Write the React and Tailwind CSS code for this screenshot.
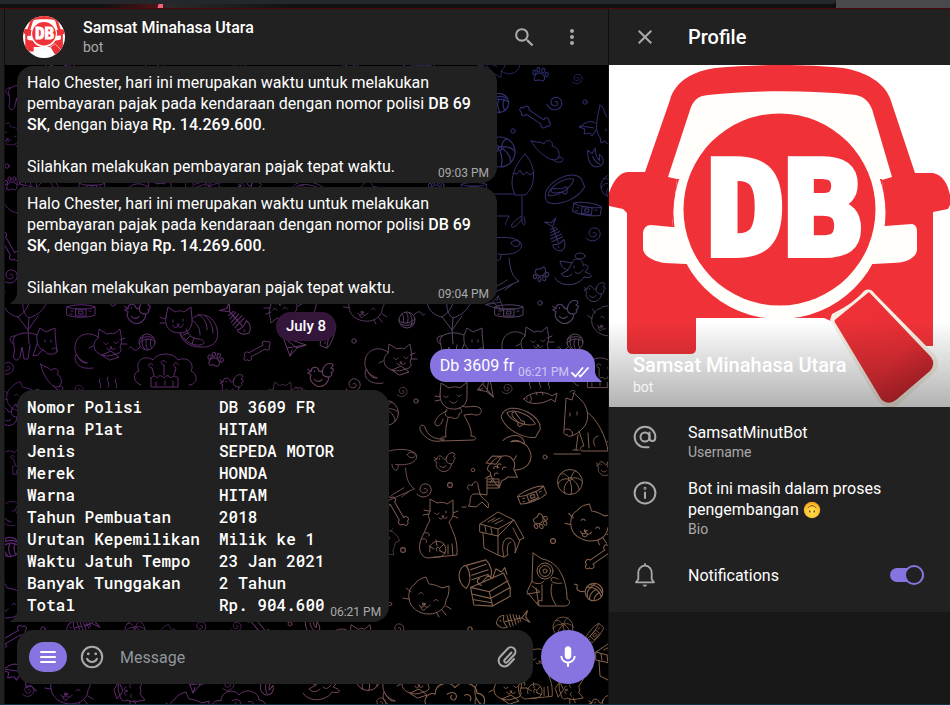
import React from "react";
import { MdSearch, MdMoreVert, MdClose, MdMic } from "react-icons/md";

/* ---------- Wallpaper doodles ---------- */

const DOODLES = {
  bone: (
    <path d="M-9 -2.5 H9 C8 -6 13 -8 14 -4 C18 -4 18 1 14.500 1 C15 5 10 6 9 2.500 H-9 C-8 6 -13 7 -14 3.500 C-18 4 -18 -1 -14.500 -1 C-15 -5 -10 -6 -9 -2.500Z" />
  ),
  paw: (
    <>
      <path d="M-5 5 C-6 1 -3 -2 0 -2 C3 -2 6 1 5 4 C4 7 1 5 0 5 C-2 5 -4 8 -5 5Z" />
      <ellipse cx="-6" cy="-1.500" rx="1.600" ry="2.200" />
      <ellipse cx="-2.500" cy="-5" rx="1.600" ry="2.200" />
      <ellipse cx="2.500" cy="-5" rx="1.600" ry="2.200" />
      <ellipse cx="6.500" cy="-1.500" rx="1.600" ry="2.200" />
    </>
  ),
  swirl: <path d="M0 0 C1 -2 4 0 3 2.500 C1 5 -4 4 -4 0 C-4 -5 2 -7 6 -3 C9 2 6 7 0 8 C-3 8 -5 7 -7 5" />,
  dot: <circle r="2.200" />,
  yarn: (
    <>
      <circle r="8" />
      <path d="M-7 -3 C-2 -6 3 -6 6 -4 M-8 1 C-3 -4 3 -4 8 -1 M-4 -6 C-6 0 -5 5 -2 7 M0 -3 C-2 1 -1 5 1 8 M4 -3 C3 1 3 4 5 6 M-7 5 C-10 9 -14 9 -15 6 C-16 4 -17 5 -18 6" />
    </>
  ),
  ball: (
    <>
      <circle r="12.500" />
      <circle cy="-3" r="1.500" />
      <path d="M-1 -4 C-4 -8 -7 -9 -9 -8 M1 -4 C2 -8 4 -11 6 -11 M-2 -3 C-7 -4 -11 -1 -12 2 M-1 -2 C-6 3 -7 7 -5 11 M0 -1 C2 4 2 8 1 12 M2 -3 C6 0 9 4 9 8 M2 -4 C6 -5 10 -3 12 -1" />
    </>
  ),
  fishbone: (
    <path d="M-16 0 C-14 -6 -9 -7 -7 -6 C-9 -2 -8 3 -6 6 C-11 7 -15 4 -16 0Z M-7 0 H10 M10 0 L17 -6 L14 0 L17 6 L10 0 M-4 -6 L-3 6 M-1 -6 L0 6 M2 -5 L3 5 M5 -4 L6 4 M8 -3 L8 3 M-12 -2 L-11 -1" />
  ),
  collar: (
    <>
      <path d="M-14 -4 C-8 -7 8 -7 14 -4 V4 C8 7 -8 7 -14 4Z M-14 -4 C-8 -1 8 -1 14 -4 M-5 -2 H5 V5 H-5Z M-2 0 H2 V3 H-2Z" />
      <path d="M-10 0 H-8 M8 0 H10 M-11 3 H-9" />
    </>
  ),
  bird: (
    <path d="M-12 -6 L-9 -4 C-9 -9 -3 -9 -2 -5 C0 -3 1 -4 2 -7 C4 -11 7 -12 10 -11 C12 -10 10 -8 9 -7 C12 -7 12 -4 9 -3 C11 -2 9 1 7 1 C7 7 1 11 -4 9 C-9 7 -11 2 -9 -1 L-12 -3 L-9 -4 M2 -7 C0 -2 2 1 7 1 M-6 -5 V-4 M-6 3 C-4 6 0 5 1 3" />
  ),
  catFace: (
    <path d="M-19 3 C-20 -3 -18 -9 -13 -12 C-11 -16 -6 -18 -2 -19 C-1 -16 0 -14 1 -12 C5 -12 10 -10 14 -8 L21 -10 C21 -5 21 -1 18 4 C18 12 10 18 1 18 C-9 18 -18 12 -19 3Z M-9 -2 C-8 -4 -6 -4 -5 -2 M6 5 C7 3 9 3 10 5 M-5 7 L-2 8 L-5 9Z M-4 9 C-3 12 -8 12 -9 9 M-4 9 C-3 12 1 12 2 9 M-7 11 C-7 15 -3 15 -2 12 M-22 -8 L-17 -4 M-25 2 L-20 3 M14 14 L18 19 M18 10 L23 13 M9 17 L11 21" />
  ),
  catSit: (
    <path d="M-9 -17 L-9 -29 L-2 -25 C2 -26 5 -26 8 -24 L14 -28 L14 -17 C15 -11 12 -9 10 -6 C14 4 19 12 18 27 L-12 30 C-20 28 -22 18 -16 7 C-13 1 -12 -3 -9 -8 C-11 -11 -11 -14 -9 -17Z M-15 -18 L-10 -17 M-16 -13 L-10 -14 M14 -15 L19 -17 M14 -12 L19 -10 M-4 -15 C-3 -13 -1 -13 0 -15 M7 -17 V-15 M3 -12 L5 -12 L4 -11 C3 -8 0 -9 0 -10 M4 -11 C5 -9 8 -9 8 -11 M-14 5 C-10 4 -9 6 -10 8 M-17 11 C-13 10 -11 13 -13 15 M-9 24 C-12 14 2 9 6 18 C9 25 3 31 -5 29 M-2 23 C-5 18 2 18 1 23 M-10 18 L-5 21 M-3 12 L-2 18 M5 16 L1 20 M6 25 L1 23 M9 26 V17 M14 27 L13 16" />
  ),
  catCurl: (
    <path d="M-2 -8 L-1 -17 L7 -12 C10 -13 12 -13 14 -12 L20 -17 C21 -10 23 -5 20 1 C23 5 19 8 15 8 C8 12 -2 9 -5 4 C-7 -1 -6 -5 -2 -8Z M-2 -9 C-12 -16 -24 -11 -25 0 C-26 8 -21 14 -13 17 M-13 17 C-20 18 -22 10 -24 8 C-28 18 -18 24 -7 22 M4 -3 C5 -1 7 -1 8 -3 M14 -4 C15 -2 17 -2 18 -4 M10 1 L12 1 L11 2 C10 5 7 4 7 2 M11 2 C12 4 15 4 15 2 M2 9 L11 5 L19 11 L10 14Z M20 -6 L25 -8 M21 -2 L27 -2 M-7 0 L-11 2" />
  ),
  catStripe: (
    <path d="M-24 -10 L-22 -20 L-15 -15 C-11 -17 -8 -16 -6 -15 L1 -20 L2 -8 C3 1 -3 6 -10 6 C-20 6 -26 0 -24 -10Z M2 -8 C10 -16 24 -12 27 2 C30 15 22 21 10 20 C0 20 -8 15 -10 6 M-17 -7 V-5 M-7 -8 V-6 M-13 -3 L-11 -3 L-12 -1 C-14 2 -17 0 -17 -2 M-12 -1 C-10 2 -7 0 -7 -3 M-30 -10 L-25 -8 M-30 -4 L-25 -4 M-10 6 C-6 15 4 19 10 18 C17 17 14 12 8 12 C0 11 -3 5 -4 2 M-7 8 L-2 6 M-4 13 L0 9 M2 17 L4 11 M8 -13 C15 -8 17 -4 17 3 M15 -11 C20 -7 23 -1 23 6 M3 -6 C8 -3 10 2 10 8" />
  ),
  catWave: (
    <path d="M-12 -21 L-11 -33 L-3 -28 C2 -30 6 -29 8 -28 L15 -34 L15 -19 C15 -12 10 -8 4 -7 C-5 -6 -12 -11 -12 -21Z M-8 -20 C-7 -18 -5 -18 -4 -20 M5 -21 C6 -19 8 -19 9 -21 M-2 -15 C0 -12 3 -12 5 -15 M-17 -20 L-12 -19 M-17 -15 L-12 -16 M-5 -7 C-10 -2 -4 3 -1 1 C3 4 8 2 7 -2 C12 -4 9 -8 7 -8 M10 -10 C15 -7 22 -12 28 -8 C32 -3 26 1 20 -2 L12 -1 C17 8 20 14 19 20 C24 20 25 23 22 24 L-10 25 C-13 23 -10 20 -6 21 C-7 12 -5 7 -4 2 M-5 -5 C-12 -3 -18 4 -17 8 C-15 12 -10 9 -9 3 M-8 23 C-18 24 -25 19 -27 11 C-30 7 -33 10 -32 14 C-27 23 -18 28 -8 24" />
  ),
  dogSit: (
    <path d="M-19 13 C-24 13 -23 7 -19 7 C-14 7 -12 12 -15 14 C-16 15 -18 14 -19 13Z M-22 8 L-20 -24 L-14 -22 L-12 -29 L-5 -22 C4 -13 3 0 -3 6 C-6 10 -10 12 -14 14 M-16 -9 V-6 M-9 -10 V-7 M1 -10 C12 -2 20 15 22 29 H-4 C-7 27 -5 24 -2 24 L-7 9 M3 26 L2 11 M9 24 C6 20 8 14 12 14 M-10 28 L-8 13 M-13 28 H-7 M21 20 C25 18 26 13 24 10 M-32 32 H-6 M-16 -30 C-12 -34 -9 -30 -13 -29" />
  ),
  sleuth: (
    <>
      <path d="M-15 -26 L-16 2 C-12 6 -6 5 -4 2 M-15 -26 L-6 -20 C10 -18 19 0 19 20 C24 22 21 28 15 27 H-8 C-13 26 -11 20 -6 22 V6 M-16 2 L-21 13 L-9 27 L-12 9 M4 5 C2 12 3 19 8 26 M14 4 C9 5 4 4 3 1 C3 -2 6 -2 10 0 M-16 7 L-8 13 L-21 15" />
      <circle cx="-3" cy="-8" r="8" />
      <circle cx="-3" cy="-8" r="5.500" />
      <circle cx="-3" cy="-8" r="2" />
    </>
  ),
  house: (
    <path d="M-22 -10 L-4 -22 L12 -14 L-4 2 L-22 -2Z M-22 -10 L-4 -5 L12 -14 L22 4 L17 6 L11 -6 M-4 -5 V2 M-19 -1 L-18 14 L-4 21 L-4 2 M-4 21 L2 23 C-1 12 1 4 7 4 C13 5 14 12 13 19 L18 6 M2 23 L6 21 C4 14 6 8 9 8 M-10 -12 L-2 -16 M-7 -10 L1 -14 M-14 -12 L-7 -16 M-17 -8 L-16 -2 M-11 -6 L-10 0" />
  ),
  chest: (
    <path d="M-14 4 L16 -9 L22 4 L22 12 L6 21 L-11 20 L-14 4Z M-14 4 L3 8 L6 21 M3 8 L20 -2 M-13 10 L4 14 L22 4 M-12 15 L5 18 M-18 5 C-28 -2 -25 -15 -18 -16 L0 -21 C5 -16 6 -9 4 -5 M-18 5 C-14 0 -13 -8 -18 -16 M-14 -12 L0 -17 M-13 -7 L2 -12 M-13 -3 L2 -8 M-4 0 L2 -7 L6 -4 L9 -13 L14 -10 L17 -14 L19 -8 M-6 -4 C-10 -3 -7 2 -4 2" />
  ),
  bowl: (
    <>
      <path d="M-21 2 C-20 -9 -8 -11 4 -8 C14 -5 19 0 20 6 L17 15 C5 19 -14 14 -21 2Z M-16 -3 C-10 -9 8 -6 14 2 C8 7 -10 5 -16 -3Z" />
      <path d="M-10 -1 C-13 -5 -8 -7 -7 -4 L0 2 C4 1 5 5 1 6 C0 9 -4 8 -3 4 L-9 0Z" />
    </>
  ),
  mouse: (
    <path d="M-16 -12 C-10 -10 -6 -12 -3 -9 C0 -15 7 -12 5 -7 C11 -6 14 1 11 5 C9 8 4 7 1 5 C-5 2 -12 -5 -16 -12Z M11 5 C15 2 18 7 14 9 C10 10 7 8 5 6" />
  ),
  leaf: <path d="M-7 -9 C-9 2 -6 9 1 9 C8 8 8 1 4 -3 L3 3 C0 0 0 -4 1 -10 L-3 -5Z M-3 -2 C-2 3 0 5 3 7" />,
  tail: (
    <path d="M2 -22 C-11 -8 -14 8 -8 18 H-35 M2 -22 C15 -8 12 12 2 19 H-8 M-10 -3 L-6 -2 L-3 -6 L0 -1 L4 -4 L7 -1 L11 -4 M-1 20 V38 C-3 50 5 54 1 41 M-1 40 C-9 44 -13 50 -11 51 C-7 52 -3 45 -1 43 M-26 40 H-14 C-16 45 -19 48 -17 49" />
  ),
  dogHead: (
    <path d="M-16 -18 C-6 -22 12 -22 17 -15 C20 -7 8 -2 -6 -4 M7 -15 C9 -19 15 -18 16 -14 C14 -10 8 -11 7 -15 M-10 -4 C-9 4 -3 5 -3 -3 M5 0 C6 12 9 20 15 23 L-20 39 M3 22 C-2 26 -7 27 -11 31 M9 26 C6 29 4 29 1 32" />
  ),
  balloons: (
    <path d="M-21 -22 C-27 -8 -18 1 -8 3 C1 -3 6 -12 2 -22 M2 -22 C-6 -12 -4 -1 3 4 C15 0 24 -10 21 -22 M-8 3 L2 16 L3 4 M2 16 L12 2 M2 16 L3 30" />
  ),
  hangDog: (
    <path d="M-13 0 C-5 -5 4 -3 9 -1 L12 -8 L18 -4 L27 -8 C27 -1 28 8 29 16 C24 20 18 18 17 15 C11 13 8 8 9 -1 M-13 0 C-18 6 -12 9 -14 17 C-16 25 -10 26 -8 21 L-6 11 L-4 23 L0 23 L2 9 M9 8 L5 20 L10 19 L15 13 M17 4 V6 M23 4 V6 M-13 0 C-20 -1 -19 7 -14 8 M24 13 C27 10 31 14 29 16" />
  ),
  plane: <path d="M-10 -10 L13 -2 L4 1 L-3 9 L-6 1 L-10 -10 L4 1 M-6 1 L13 -2 M-3 9 L-1 3" />,
  cake: (
    <path d="M-24 12 C-33 9 -32 -1 -26 -2 C-31 -12 -20 -19 -12 -13 C-7 -21 8 -21 13 -13 C22 -17 30 -10 26 -2 C34 2 32 12 24 12 M-14 5 V14 H13 V5 C10 2 7 3 6 5 C4 2 0 2 -1 5 C-3 2 -7 2 -8 5 C-10 2 -13 3 -14 5Z M-11 2 L-13 -5 C-19 -6 -16 -12 -12 -8 M-1 2 V-8 C-6 -9 -3 -15 1 -11 M9 2 L11 -5 C6 -8 10 -13 14 -8 M-9 9 V13 M0 8 V12 M8 8 V13" />
  ),
  steam: <path d="M-8 -8 C-11 -5 -5 -3 -8 1 M0 -10 C-3 -7 3 -4 0 0 M8 -8 C5 -5 11 -3 8 1 M-10 6 C-4 3 4 3 10 6" />,
  fish: (
    <path d="M-16 5 C-12 -2 6 -4 12 2 L17 -1 L15 8 L11 5 C4 10 -12 12 -16 5Z M-10 1 C-8 4 -8 6 -10 8 M-4 -2 L-3 1 M2 -2 L3 1 M-13 4 V5 M-10 -12 C-13 -9 -7 -7 -10 -5 M0 -13 C-3 -10 3 -8 0 -6 M9 -12 C6 -9 12 -7 9 -5" />
  ),
  flagMouse: (
    <path d="M-10 -4 C-14 -8 -9 -11 -7 -8 C-6 -14 0 -13 -1 -8 L1 0 L-6 0 C-11 4 -7 10 -11 12 L-3 13 L3 8 L9 14 C12 6 3 7 1 0 M1 0 L8 1 V-15 H20 V-6 H8 M8 -12 H20 M8 -9 H20 M-13 13 H-17" />
  ),
  angel: (
    <>
      <ellipse cx="2" cy="-19" rx="5" ry="3" />
      <path d="M-23 3 C-16 14 2 10 6 2 C15 4 16 0 7 -3 C14 -9 7 -12 5 -9 C6 -16 -3 -19 -6 -12 L-18 -14 C-17 -8 -14 -6 -10 -5 L-17 -1 C-13 3 -9 2 -6 -1 M-10 -5 L-6 -12 M-3 -3 C0 0 3 -2 5 -5 M-4 -9 V-7" />
    </>
  ),
  dragon: (
    <path d="M3 -20 C0 -6 -3 6 3 12 L4 18 L8 16 L13 21 M3 -20 C8 -18 7 -10 10 -8 M-2 -2 C-8 -6 -13 -1 -18 2 L-12 4 L-13 9 L-7 8 L-5 11 L-1 5 M-16 1 L-3 3 M9 4 V6" />
  ),
  cloud: (
    <path d="M-26 14 C-32 5 -24 0 -19 2 C-19 -8 -6 -11 -1 -4 C6 -12 19 -7 19 1 C28 2 28 12 21 14 M-8 2 C-2 -2 3 3 -1 7 C-4 8 -6 5 -4 3 M8 3 C11 1 15 4 13 8" />
  ),
};

// [doodle, x, y, rotation, scale]
const PLACED = [
  ["catCurl", 500, 64, 180, 0.8], ["paw", 540, 75, 10, 1], ["swirl", 577, 78, 0, 0.7], ["yarn", 499, 103, 0, 1.2],
  ["swirl", 555, 102, 20, 1], ["dot", 585, 102, 0, 1], ["bone", 535, 117, 34, 1], ["dot", 513, 131, 0, 1],
  ["mouse", 547, 153, 0, 1], ["leaf", 596, 158, -10, 1], ["dragon", 597, 125, 0, 1], ["tail", 523, 176, 0, 1],
  ["ball", 500, 152, 0, 1.2], ["bowl", 562, 187, -42, 1], ["collar", 587, 209, 8, 1], ["fishbone", 556, 236, 250, 1],
  ["swirl", 593, 233, 0, 1], ["paw", 541, 274, 170, 1], ["angel", 578, 275, 0, 1], ["bird", 595, 293, 0, 0.9],
  ["bird", 566, 313, 0, 1.1], ["collar", 509, 311, 0, 1], ["dot", 540, 303, 0, 1], ["catFace", 607, 321, 20, 0.8],
  ["catCurl", 527, 344, 0, 1], ["yarn", 575, 342, 0, 1], ["dogHead", 504, 258, 0, 1], ["ball", 612, 186, 0, 0.9],
  ["balloons", 26, 314, 0, 1], ["hangDog", 28, 336, 0, 1], ["collar", 81, 311, 0, 1], ["bird", 138, 313, 0, 1.1],
  ["catStripe", 190, 327, 0, 1], ["fishbone", 237, 320, 228, 1.1], ["catCurl", 291, 306, 180, 1], ["collar", 328, 335, 110, 0.9],
  ["plane", 293, 347, 0, 1], ["catCurl", 100, 346, 0, 1], ["yarn", 147, 342, 0, 1], ["bone", 257, 351, -28, 0.9],
  ["paw", 215, 360, 15, 1], ["cake", 165, 373, 0, 1], ["swirl", 7, 367, 0, 0.9], ["mouse", 51, 379, 18, 0.9],
  ["swirl", 78, 389, 0, 0.7], ["steam", 108, 387, 0, 1], ["bird", 232, 386, 0, 1], ["catStripe", 290, 396, 0, 0.7],
  ["bird", 321, 376, 0, 1.1], ["swirl", 353, 384, 0, 1], ["dot", 354, 341, 0, 1], ["catCurl", 390, 361, 0, 1],
  ["yarn", 407, 320, 180, 1], ["balloons", 450, 314, 0, 1], ["hangDog", 455, 336, 0, 1], ["catFace", 366, 305, 0, 0.9],
  ["catFace", 22, 397, 0, 0.8], ["dot", 113, 304, 0, 1], ["plane", 496, 303, 180, 0.8], ["swirl", 402, 391, 0, 0.7],
  ["catWave", 452, 416, 0, 1], ["fish", 540, 394, 0, 1], ["swirl", 507, 388, 0, 0.7], ["dot", 416, 401, 0, 1],
  ["ball", 386, 413, 0, 1], ["bowl", 522, 419, 12, 1], ["dogSit", 586, 422, 0, 1], ["catCurl", 508, 463, 150, 1],
  ["bird", 445, 463, 0, 0.9], ["dogHead", 401, 468, 0, 0.9], ["swirl", 424, 489, 0, 1], ["dot", 473, 470, 0, 0.8],
  ["dot", 450, 485, 0, 1.1], ["dot", 403, 550, 0, 1.1], ["dot", 553, 541, 0, 1.1], ["dot", 545, 457, 0, 0.9],
  ["dot", 390, 604, 0, 0.8], ["plane", 486, 388, 60, 0.9], ["cake", 600, 375, 0, 0.9], ["flagMouse", 479, 494, 0, 1],
  ["collar", 532, 495, -22, 1], ["ball", 570, 482, 0, 1], ["bone", 397, 511, 60, 1], ["catSit", 439, 528, 0, 1],
  ["house", 502, 534, 0, 1], ["paw", 540, 521, 140, 1], ["catFace", 590, 523, 4, 1], ["chest", 486, 583, 0, 1.1],
  ["sleuth", 548, 579, 0, 1], ["yarn", 594, 592, 40, 1.1], ["bone", 599, 557, -35, 1], ["catFace", 428, 596, 0, 1],
  ["fishbone", 512, 620, -12, 1], ["ball", 563, 627, 0, 0.8], ["collar", 594, 634, -50, 0.8], ["house", 618, 662, 0, 1],
  ["catFace", 388, 542, 90, 0.6], ["swirl", 398, 628, 0, 0.8], ["dot", 470, 629, 0, 1], ["bird", 606, 468, 0, 0.8],
  ["catSit", 536, 672, 0, 0.9], ["catCurl", 568, 680, 90, 0.9], ["bird", 601, 707, 0, 1],
  ["hangDog", 22, 88, 0, 0.9], ["catFace", 10, 134, 0, 0.6], ["dot", 7, 166, 0, 1], ["paw", 12, 184, 0, 1],
  ["balloons", 24, 210, 0, 0.9], ["bone", 8, 246, 60, 1], ["swirl", 10, 275, 0, 1], ["bird", 10, 416, 0, 1],
  ["cake", 24, 463, 0, 0.8], ["catCurl", 20, 510, 0, 0.7], ["yarn", 10, 547, 0, 1.2], ["catFace", 6, 600, 0, 1],
  ["bone", 12, 637, -30, 1], ["dragon", 22, 668, 0, 1.1], ["swirl", 28, 690, 0, 0.8], ["catFace", 70, 686, 0, 1],
  ["catCurl", 128, 680, 90, 1], ["catFace", 188, 711, 0, 1], ["cloud", 240, 699, 0, 1], ["swirl", 228, 684, 0, 0.8],
  ["leaf", 268, 686, 30, 1], ["angel", 326, 690, 0, 1], ["ball", 368, 678, 0, 1], ["swirl", 380, 702, 0, 0.8],
  ["catCurl", 408, 684, 0, 1], ["cloud", 456, 692, 0, 1.1], ["catCurl", 500, 690, 0, 1], ["plane", 196, 684, 0, 1],
  ["fishbone", 82, 626, -15, 1], ["ball", 135, 630, 0, 0.8], ["catFace", 170, 636, 0, 0.6], ["swirl", 200, 626, 0, 0.8],
  ["swirl", 236, 626, 0, 0.7], ["bone", 258, 626, 50, 1], ["dot", 290, 624, 0, 0.9], ["leaf", 313, 625, 0, 1],
  ["catCurl", 352, 640, 0, 0.9], ["dot", 43, 629, 0, 1],
  ["house", 40, 186, 0, 0.9], ["collar", 92, 187, 0, 0.9], ["catCurl", 150, 196, 0, 1], ["chest", 205, 190, 0, 0.8],
  ["bird", 250, 190, 0, 1], ["bowl", 310, 190, 0, 0.9], ["catFace", 372, 196, 0, 0.8], ["paw", 436, 187, 0, 1],
  ["collar", 474, 188, 0, 0.9], ["bone", 60, 66, 20, 1], ["bird", 155, 66, 0, 1], ["ball", 240, 62, 0, 0.6],
  ["paw", 350, 66, 0, 1], ["fishbone", 420, 66, 0, 1],
];

function Wallpaper() {
  return (
    <svg className="absolute inset-0 h-full w-full bg-black" aria-hidden="true">
      <defs>
        <linearGradient id="wall-down" x1="0" y1="0" x2="0" y2="1">
          <stop offset="0" stopColor="#2c3078" />
          <stop offset="0.28" stopColor="#38306a" />
          <stop offset="0.42" stopColor="#5c4563" />
          <stop offset="0.56" stopColor="#7f5e50" />
          <stop offset="1" stopColor="#8c6649" />
        </linearGradient>
        <linearGradient id="wall-across" x1="0" y1="0" x2="1" y2="0">
          <stop offset="0" stopColor="#5a2672" />
          <stop offset="0.4" stopColor="#5e2c6a" stopOpacity="0.9" />
          <stop offset="0.78" stopColor="#6a3f60" stopOpacity="0" />
        </linearGradient>
        <mask id="wall-mask" maskUnits="userSpaceOnUse" x="0" y="0" width="100%" height="100%">
          <g transform="translate(-5 -65)" fill="none" stroke="#fff" strokeLinecap="round" strokeLinejoin="round">
            {PLACED.map(([name, x, y, r, s], i) => (
              <g key={i} transform={`translate(${x} ${y}) rotate(${r}) scale(${s})`}>
                {DOODLES[name]}
              </g>
            ))}
          </g>
        </mask>
      </defs>
      <g mask="url(#wall-mask)">
        <rect width="100%" height="100%" fill="url(#wall-down)" />
        <rect width="100%" height="100%" fill="url(#wall-across)" />
      </g>
    </svg>
  );
}

/* ---------- Logo ---------- */

function Logo({ id, className }) {
  return (
    <svg viewBox="0 0 341 342" preserveAspectRatio="xMidYMid slice" className={className} aria-hidden="true">
      <defs>
        <linearGradient id={id} x1="0" y1="0" x2="1" y2="1">
          <stop offset="0" stopColor="#f03238" />
          <stop offset="0.6" stopColor="#e62f35" />
          <stop offset="1" stopColor="#b8202a" />
        </linearGradient>
      </defs>
      <rect width="341" height="342" fill="#fff" />
      <path
        d="M61 35 C66 16 85 6 106 3 C148 -1 198 -1 234 3 C258 7 275 18 281 33 L306 108 H324 C335 110 341 122 342 138 L339 144 L324 147 V281 H280 L215 253 H87 V284 Q87 289 81 289 H24 Q18 289 18 283 V148 L14 144 L0 141 V128 C4 116 11 107 19 107 H36Z"
        fill="#f03238"
      />
      <path d="M59 112 L82 42 C86 33 91 31 99 30 C146 25 201 25 247 30 C256 32 260 37 263 44 L283 112 L273 115 L276 161 L303 159 Q308 160 308 166 V184 C308 193 297 198 283 198 L264 199 H77 L56 198 C42 196 34 190 34 183 V168 Q35 160 42 160 L63 162 L68 114Z" fill="#fffefa" />
      <path d="M268 114 L273 114 L276 161 L269 162Z M68 114 L73 114 L70 162 L63 162Z" fill="#f03238" />
      <circle cx="170.500" cy="148" r="106" fill="#fffefa" />
      <circle cx="170.500" cy="144.500" r="96" fill="#f03238" />
      <path d="M223 249 C239 241 247 235 255 226 Q261 222 266 229 L326 290 Q332 300 326 307 L288 341 Q275 346 267 333 L221 255Z" fill="#f6f0e4" />
      <path d="M227 254 L260 227 L322 292 Q327 299 321 306 L287 335 Q279 341 272 334 L227 259 Q224 256 227 254Z" fill={`url(#${id})`} />
      <text
        x="175"
        y="189"
        textAnchor="middle"
        fontSize="129"
        className="font-['DejaVu_Sans_Mono',monospace] font-bold"
        fill="#fff"
        stroke="#fff"
        strokeWidth="8"
      >
        DB
      </text>
    </svg>
  );
}

/* ---------- Icons ---------- */

const stroke = { fill: "none", stroke: "currentColor", strokeWidth: 2, strokeLinecap: "round", strokeLinejoin: "round" };

const AtIcon = () => (
  <svg viewBox="0 0 24 24" className="size-6" {...stroke}>
    <circle cx="12" cy="12" r="4.500" />
    <path d="M16.500 7.500v5.500c0 2 1.200 3 2.800 3s3-1.200 3-3.500V12A10.300 10.300 0 1 0 12 22.300h3.500" />
  </svg>
);

const InfoIcon = () => (
  <svg viewBox="0 0 24 24" className="size-6" {...stroke}>
    <circle cx="12" cy="12" r="10.400" />
    <path d="M12 11.500V17" />
    <circle cx="12" cy="7.300" r="0.500" />
  </svg>
);

const BellIcon = () => (
  <svg viewBox="0 0 24 24" className="size-6" {...stroke} strokeWidth="1.800">
    <path d="M3 19.300h18l-2.300-3V10c0-4-2.700-7.300-6.700-7.300S5.300 6 5.300 10v6.300zM12 1v1.500" />
    <path d="M10.300 22.200h3.400L12 23.200z" fill="currentColor" strokeWidth="1" />
  </svg>
);

const SmileIcon = () => (
  <svg viewBox="0 0 24 24" className="size-6" {...stroke}>
    <circle cx="12" cy="12" r="10.200" />
    <path d="M7 13.800c1 2.100 2.900 3.200 5 3.200s4-1.100 5-3.200" />
    <circle cx="8.300" cy="8.800" r="0.800" fill="currentColor" strokeWidth="1.200" />
    <circle cx="15.700" cy="8.800" r="0.800" fill="currentColor" strokeWidth="1.200" />
  </svg>
);

const ClipIcon = () => (
  <svg viewBox="0 0 24 24" className="size-6" {...stroke}>
    <path d="M16.500 7.500l-6.800 7.200a1.700 1.700 0 0 0 2.500 2.400l7-7.400a4.400 4.400 0 0 0-6.300-6.200l-7.600 8a5.800 5.800 0 0 0 8.300 8.200l5.400-5.700" />
  </svg>
);

const MenuIcon = () => (
  <svg viewBox="0 0 18 14" className="h-[14px] w-[18px]" {...stroke}>
    <path d="M2 2h14M2 7h14M2 12h14" />
  </svg>
);

const ChecksIcon = () => (
  <svg viewBox="0 0 18 12" className="h-3 w-[18px]" {...stroke} strokeWidth="1.800">
    <path d="M1 7l3.500 3.500L11.500 2M8.500 9.500l1 1L17 2" />
  </svg>
);

const UpsideDownFace = () => (
  <svg viewBox="0 0 18 18" className="inline-block size-[18px] align-[-4px]" role="img" aria-label="Upside-down face">
    <defs>
      <radialGradient id="face-fill" cx="0.5" cy="0.6" r="0.6">
        <stop offset="0" stopColor="#ffe25a" />
        <stop offset="0.7" stopColor="#fdc42e" />
        <stop offset="1" stopColor="#f0951c" />
      </radialGradient>
    </defs>
    <circle cx="9" cy="9" r="8.200" fill="url(#face-fill)" />
    <path d="M5 6.800C6.500 3.900 11.500 3.900 13 6.800" fill="none" stroke="#7a4510" strokeWidth="1" strokeLinecap="round" />
    <ellipse cx="6.800" cy="10.400" rx="0.700" ry="1.200" fill="#6b3c10" />
    <ellipse cx="11.200" cy="10.400" rx="0.700" ry="1.200" fill="#6b3c10" />
  </svg>
);

/* ---------- Messages ---------- */

function LeftTail() {
  return (
    <svg viewBox="0 0 8 18" className="absolute bottom-0 -left-[7px] h-[18px] w-2 fill-[#212121]" aria-hidden="true">
      <path d="M8 0C8 8 6 14 .5 17Q0 18 1 18H8Z" />
    </svg>
  );
}

function Reminder({ time, last }) {
  return (
    <article
      className={`relative w-full max-w-[480px] rounded-2xl bg-[#212121] py-1.5 pr-2 pl-2.5 ${
        last ? "rounded-tl-md rounded-bl-none" : "rounded-bl-md"
      }`}
    >
      <p>
        Halo Chester, hari ini merupakan waktu untuk melakukan pembayaran pajak pada kendaraan dengan nomor polisi{" "}
        <b className="font-medium">DB 69 SK</b>, dengan biaya <b className="font-medium">Rp. 14.269.600</b>.
      </p>
      <div className="mt-[21px] flex items-end justify-between">
        <p>Silahkan melakukan pembayaran pajak tepat waktu.</p>
        <time className="-mb-1.5 text-xs leading-5 text-[#aaaaaa]">{time}</time>
      </div>
      {last && <LeftTail />}
    </article>
  );
}

const RECORD = [
  ["Nomor Polisi", "DB 3609 FR"],
  ["Warna Plat", "HITAM"],
  ["Jenis", "SEPEDA MOTOR"],
  ["Merek", "HONDA"],
  ["Warna", "HITAM"],
  ["Tahun Pembuatan", "2018"],
  ["Urutan Kepemilikan", "Milik ke 1"],
  ["Waktu Jatuh Tempo", "23 Jan 2021"],
  ["Banyak Tunggakan", "2 Tahun"],
  ["Total", "Rp. 904.600"],
];

function VehicleRecord() {
  return (
    <article className="relative flex items-end rounded-2xl rounded-bl-none bg-[#212121] py-1.5 pr-2 pl-2.5">
      <table className="font-['Roboto_Mono','DejaVu_Sans_Mono',monospace] text-base leading-[22px] font-medium">
        <tbody>
          {RECORD.map(([label, value]) => (
            <tr key={label}>
              <th scope="row" className="w-48 p-0 text-left font-medium">{label}</th>
              <td className="p-0 whitespace-nowrap">{value}</td>
            </tr>
          ))}
        </tbody>
      </table>
      <time className="-mb-1.5 -ml-1 text-xs leading-5 whitespace-nowrap text-[#aaaaaa]">06:21 PM</time>
      <LeftTail />
    </article>
  );
}

function Chat() {
  return (
    <main className="flex min-w-0 flex-1 flex-col">
      <header className="flex h-14 items-center bg-[#212121] pr-6 pl-[18px]">
        <Logo id="avatar-handle" className="size-[42px] rounded-full" />
        <div className="ml-[18px] flex-1">
          <h1 className="text-base leading-5 font-medium">Samsat Minahasa Utara</h1>
          <p className="text-sm leading-[18px] text-[#aaaaaa]">bot</p>
        </div>
        <div className="flex gap-[23px] text-[#aaaaaa]">
          <button type="button" aria-label="Search"><MdSearch size={25} /></button>
          <button type="button" aria-label="More actions"><MdMoreVert size={24} /></button>
        </div>
      </header>
      <div className="relative flex flex-1 flex-col">
        <Wallpaper />
        <section className="relative flex flex-1 flex-col items-start justify-end gap-2 pr-[13px] pb-2 pl-3">
          <div className="flex w-full flex-col gap-1">
            <Reminder time="09:03 PM" />
            <Reminder time="09:04 PM" last />
          </div>
          <div className="self-center rounded-full bg-[#35163b] px-2.5 py-1 text-[15px] font-medium">July 8</div>
          <article className="relative flex items-end self-end rounded-2xl rounded-br-none bg-[#8774e1] py-1.5 pr-1.5 pl-2.5">
            <p>Db 3609 fr</p>
            <div className="-mb-1.5 ml-1 flex items-center gap-0.5">
              <time className="text-xs leading-5 text-[#cfc7f3]">06:21 PM</time>
              <ChecksIcon />
            </div>
            <svg viewBox="0 0 8 18" className="absolute -right-[7px] bottom-0 h-[18px] w-2 fill-[#8774e1]" aria-hidden="true">
              <path d="M0 0C0 8 2 14 7.500 17Q8 18 7 18H0Z" />
            </svg>
          </article>
          <VehicleRecord />
        </section>
        <form className="relative flex items-center gap-2 pr-[13px] pb-5 pl-3" onSubmit={(e) => e.preventDefault()}>
          <div className="flex h-[54px] min-w-0 flex-1 items-center rounded-2xl bg-[#212121] px-3 text-[#aaaaaa]">
            <button type="button" aria-label="Commands" className="flex h-[30px] w-[38px] items-center justify-center rounded-full bg-[#8774e1] text-white">
              <MenuIcon />
            </button>
            <button type="button" aria-label="Emoji" className="ml-[13px]"><SmileIcon /></button>
            <input
              type="text"
              aria-label="Message"
              placeholder="Message"
              className="ml-4 min-w-0 flex-1 bg-transparent text-white outline-none placeholder:text-[#8f979d]"
            />
            <button type="button" aria-label="Attach file" className="mr-0.5"><ClipIcon /></button>
          </div>
          <button type="button" aria-label="Record voice message" className="flex size-[54px] items-center justify-center rounded-full bg-[#8774e1]">
            <MdMic size={26} />
          </button>
        </form>
      </div>
    </main>
  );
}

/* ---------- Profile ---------- */

function Row({ icon, label, children }) {
  return (
    <li className="flex items-start gap-[31px] py-2">
      <span className="mt-[3px] text-[#aaaaaa]">{icon}</span>
      <div>
        <p>{children}</p>
        <p className="text-sm leading-[18px] text-[#aaaaaa]">{label}</p>
      </div>
    </li>
  );
}

function Profile() {
  return (
    <aside className="flex w-[342px] shrink-0 flex-col border-l border-[#0f0f0f] bg-[#181818]">
      <header className="flex h-14 items-center gap-[31px] bg-[#212121] px-6">
        <button type="button" aria-label="Close profile" className="text-[#aaaaaa]"><MdClose size={24} /></button>
        <h2 className="text-xl leading-6 font-medium">Profile</h2>
      </header>
      <div className="relative aspect-[341/342] w-full">
        <Logo id="photo-handle" className="h-full w-full" />
        <div className="absolute inset-x-0 bottom-0 bg-linear-to-b from-transparent to-black/30 px-6 pt-8 pb-2.5">
          <p className="text-xl leading-6 font-medium">Samsat Minahasa Utara</p>
          <p className="text-sm leading-5 text-white/80">bot</p>
        </div>
      </div>
      <section className="bg-[#212121] pt-[7px] pr-[26px] pb-[9px] pl-6">
        <ul className="flex flex-col gap-px">
          <Row icon={<AtIcon />} label="Username">SamsatMinutBot</Row>
          <Row icon={<InfoIcon />} label="Bio">
            Bot ini masih dalam proses pengembangan <UpsideDownFace />
          </Row>
          <li className="flex items-center gap-[31px] py-4">
            <span className="text-[#aaaaaa]"><BellIcon /></span>
            <label htmlFor="notifications" className="flex-1">Notifications</label>
            <input
              id="notifications"
              type="checkbox"
              defaultChecked
              className="relative h-5 w-[34px] appearance-none before:absolute before:inset-x-0 before:inset-y-[3px] before:rounded-full before:bg-[#707579] after:absolute after:top-0 after:left-0 after:size-5 after:rounded-full after:border-2 after:border-[#707579] after:bg-[#212121] checked:before:bg-[#8774e1] checked:after:left-[14px] checked:after:border-[#8774e1]"
            />
          </li>
        </ul>
      </section>
    </aside>
  );
}

export default function App() {
  return (
    <div className="flex min-h-screen flex-col bg-[#181818] font-[Roboto,sans-serif] text-base leading-[21px] text-white">
      <div className="flex h-[9px] border-b border-[#4a0808] bg-[#101010]">
        <div className="h-1 flex-1 rounded-br-sm bg-[#24272b]" />
        <div className="w-[114px] bg-[#4a4a4c]" />
        <svg viewBox="0 0 200 8" className="absolute top-0 left-[100px] h-2 w-[200px]" aria-hidden="true">
          <defs>
            <linearGradient id="strip-glow">
              <stop offset="0" stopColor="#101010" />
              <stop offset="0.28" stopColor="#4a1418" />
              <stop offset="0.34" stopColor="#2a2a2a" />
              <stop offset="1" stopColor="#101010" />
            </linearGradient>
          </defs>
          <path d="M0 4h200v4H0z" fill="url(#strip-glow)" />
          <path d="M58.500 4h4.500v4h-5.500z" fill="#ef6478" />
        </svg>
      </div>
      <div className="flex flex-1">
        <div className="w-[5px] shrink-0 border-r border-[#0f0f0f] bg-[#212121]" />
        <Chat />
        <Profile />
      </div>
      <div className="h-px bg-[#0d3345]" />
    </div>
  );
}
